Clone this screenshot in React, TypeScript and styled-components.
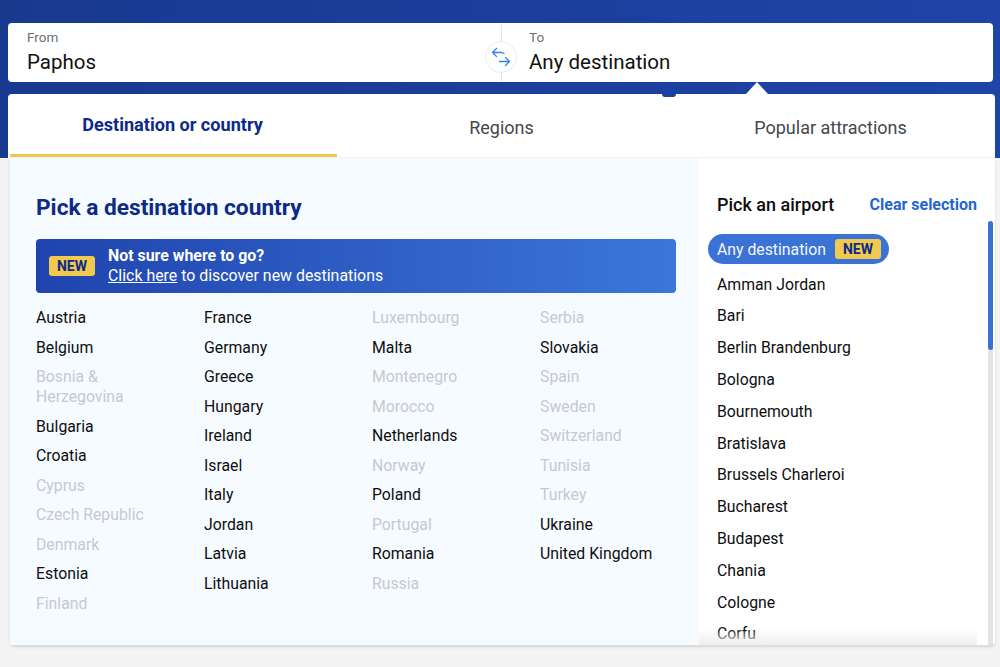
import styled, { createGlobalStyle } from "styled-components";

const GlobalStyle = createGlobalStyle`
	html, body {
		margin: 0;
		padding: 0;
		background: #f4f4f4;
		font-family: Roboto, "Liberation Sans", sans-serif;
		overflow: hidden;
	}
`;

const Page = styled.div`
	width: 1000px;
	height: 667px;
	overflow: hidden;
`;

// Hero: blue band that holds the search box and the tab bar
const Hero = styled.div`
	background: linear-gradient(90deg, #19398f 0%, #1e44a8 100%);
	height: 158px;
	padding: 23px 5px 0 8px;
	box-sizing: border-box;
`;

const SearchBox = styled.div`
	position: relative;
	display: flex;
	width: 985px;
	height: 59px;
	background: #fff;
	border-radius: 4px;
`;

const Field = styled.div<{ $left: number; $width?: number }>`
	padding: 7px 0 0 ${({ $left }) => $left}px;
	box-sizing: border-box;
	width: ${({ $width }) => ($width ? `${$width}px` : "auto")};
	flex: ${({ $width }) => ($width ? "none" : "1")};
`;

const FieldLabel = styled.div`
	font-size: 13.5px;
	line-height: 15px;
	color: #6b6e76;
`;

const FieldValue = styled.div`
	font-size: 20.5px;
	line-height: 26px;
	margin-top: 4px;
	color: #111;
`;

const Divider = styled.div`
	width: 1px;
	background: #e4e5e8;
	margin-top: 2px;
`;

const Swap = styled.div`
	position: absolute;
	left: 477px;
	top: 18px;
	width: 30px;
	height: 30px;
	border-radius: 50%;
	background: #fff;
	border: 1px solid #e9ebee;
	display: flex;
	align-items: center;
	justify-content: center;
`;

const Caret = styled.div`
	position: absolute;
	left: 738px;
	top: 59px;
	width: 0;
	height: 0;
	border-left: 11px solid transparent;
	border-right: 11px solid transparent;
	border-bottom: 12px solid #fff;
`;

const Bump = styled.div`
	position: absolute;
	left: 654px;
	top: 71px;
	width: 14px;
	height: 3px;
	background: #1a3f9e;
	border-radius: 0 0 4px 4px;
`;

const Tabs = styled.div`
	display: flex;
	width: 987px;
	height: 64px;
	margin-top: 12px;
	background: #fff;
	border-radius: 4px 4px 0 0;
	border-bottom: 1px solid #f1f2f3;
	box-sizing: border-box;
`;

const Tab = styled.div<{ $active?: boolean }>`
	position: relative;
	flex: 1;
	display: flex;
	align-items: center;
	justify-content: center;
	box-sizing: border-box;
	height: 63px;
	padding: ${({ $active }) => ($active ? "0 0 3px" : "3px 0 0")};
	font-size: ${({ $active }) => ($active ? "18.1px" : "18px")};
	font-weight: ${({ $active }) => ($active ? 700 : 400)};
	color: ${({ $active }) => ($active ? "#0c2a86" : "#45474d")};

	&::after {
		content: "";
		display: ${({ $active }) => ($active ? "block" : "none")};
		position: absolute;
		left: 2px;
		right: 0;
		bottom: 0;
		height: 3px;
		background: #f1c94f;
	}
`;

const Body = styled.div`
	display: flex;
	width: 985px;
	height: 487px;
	margin-left: 10px;
	background: #fff;
	box-shadow: 0 2px 3px rgba(0, 0, 0, 0.12);
	border-radius: 0 0 4px 4px;
`;

const Countries = styled.div`
	width: 689px;
	flex: none;
	box-sizing: border-box;
	background: #f6fbff;
	padding: 35px 23px 0 26px;
`;

const Heading = styled.h2`
	margin: 0;
	font-size: 22.7px;
	line-height: 29px;
	font-weight: 700;
	color: #0c2a86;
`;

const Banner = styled.div`
	display: flex;
	align-items: center;
	gap: 13px;
	height: 54px;
	margin-top: 17px;
	padding-left: 13px;
	border-radius: 4px;
	color: #fff;
	background: linear-gradient(90deg, #1f44ad 0%, #3c76da 100%);
`;

const NewBadge = styled.span`
	display: inline-flex;
	align-items: center;
	justify-content: center;
	width: 46px;
	height: 20px;
	border-radius: 3px;
	background: #f1c94f;
	color: #0c2a86;
	font-size: 14px;
	font-weight: 700;
`;

const BannerText = styled.div`
	font-size: 15.9px;
	line-height: 20px;
`;

const BannerTitle = styled.div`
	font-weight: 700;
`;

const Grid = styled.div`
	display: grid;
	grid-template-columns: repeat(4, 168px);
	margin-top: 15px;
`;

const Column = styled.div`
	display: flex;
	flex-direction: column;
	gap: 9.5px;
`;

const Country = styled.div<{ $off?: boolean }>`
	font-size: 15.8px;
	line-height: 20px;
	padding-right: 30px;
	color: ${({ $off }) => ($off ? "#c6c9ce" : "#0e0e10")};
`;

const Airports = styled.div`
	position: relative;
	flex: 1;
	overflow: hidden;
	padding: 34px 0 0 18px;
`;

const AirportHead = styled.div`
	display: flex;
	justify-content: space-between;
	align-items: center;
	width: 260px;
	height: 24px;
`;

const AirportTitle = styled.div`
	font-size: 18px;
	font-weight: 500;
	color: #0e0e10;
`;

const Clear = styled.div`
	font-size: 16px;
	font-weight: 700;
	color: #2465cf;
`;

const Selected = styled.div`
	display: inline-flex;
	align-items: center;
	justify-content: space-between;
	box-sizing: border-box;
	width: 181px;
	height: 30px;
	margin: 18px 0 0 -9px;
	padding: 0 8px 0 9px;
	border-radius: 15px;
	background: #3a72d6;
	color: #f3f7ff;
	font-size: 15.8px;
`;

const AirportList = styled.div`
	display: flex;
	flex-direction: column;
	gap: 11.8px;
	margin-top: 10.6px;
`;

const Airport = styled.div`
	font-size: 15.8px;
	line-height: 20px;
	color: #0e0e10;
`;

const Fade = styled.div`
	position: absolute;
	left: 0;
	bottom: 0;
	width: 278px;
	height: 16px;
	background: linear-gradient(180deg, rgba(240, 240, 240, 0), #eeeeee);
`;

const Track = styled.div`
	position: absolute;
	top: 63px;
	right: 2px;
	bottom: 0;
	width: 5px;
	background: #e1e3e7;
	border-radius: 3px 3px 0 0;
`;

const Thumb = styled.div`
	width: 5px;
	height: 129px;
	background: #3a72d6;
	border-radius: 3px;
`;

const columns: [string, boolean?][][] = [
	[["Austria"], ["Belgium"], ["Bosnia & Herzegovina", true], ["Bulgaria"], ["Croatia"], ["Cyprus", true], ["Czech Republic", true], ["Denmark", true], ["Estonia"], ["Finland", true]],
	[["France"], ["Germany"], ["Greece"], ["Hungary"], ["Ireland"], ["Israel"], ["Italy"], ["Jordan"], ["Latvia"], ["Lithuania"]],
	[["Luxembourg", true], ["Malta"], ["Montenegro", true], ["Morocco", true], ["Netherlands"], ["Norway", true], ["Poland"], ["Portugal", true], ["Romania"], ["Russia", true]],
	[["Serbia", true], ["Slovakia"], ["Spain", true], ["Sweden", true], ["Switzerland", true], ["Tunisia", true], ["Turkey", true], ["Ukraine"], ["United Kingdom"]],
];

const airports = ["Amman Jordan", "Bari", "Berlin Brandenburg", "Bologna", "Bournemouth", "Bratislava", "Brussels Charleroi", "Bucharest", "Budapest", "Chania", "Cologne", "Corfu"];

const App = () => {
	return (
		<Page>
			<GlobalStyle />
			<Hero>
				<SearchBox>
					<Field $left={19} $width={493}>
						<FieldLabel>From</FieldLabel>
						<FieldValue>Paphos</FieldValue>
					</Field>
					<Divider />
					<Field $left={27}>
						<FieldLabel>To</FieldLabel>
						<FieldValue>Any destination</FieldValue>
					</Field>
					<Swap>
						<svg width="20" height="20" viewBox="0 0 20 20" fill="none" stroke="#2f86e6" strokeWidth="1.3" strokeLinecap="round" strokeLinejoin="round">
							<path d="M5.500 1.500 1.500 5.500l4 4M1.500 5.500h9.500l2 1" />
							<path d="M14.500 10.500l4 4-4 4M18.500 14.500H8.500" />
						</svg>
					</Swap>
					<Caret />
					<Bump />
				</SearchBox>
				<Tabs>
					<Tab $active>Destination or country</Tab>
					<Tab>Regions</Tab>
					<Tab>Popular attractions</Tab>
				</Tabs>
			</Hero>
			<Body>
				<Countries>
					<Heading>Pick a destination country</Heading>
					<Banner>
						<NewBadge>NEW</NewBadge>
						<BannerText>
							<BannerTitle>Not sure where to go?</BannerTitle>
							<u>Click here</u> to discover new destinations
						</BannerText>
					</Banner>
					<Grid>
						{columns.map((col, i) => (
							<Column key={i}>
								{col.map(([name, off]) => (
									<Country key={name} $off={off}>
										{name}
									</Country>
								))}
							</Column>
						))}
					</Grid>
				</Countries>
				<Airports>
					<AirportHead>
						<AirportTitle>Pick an airport</AirportTitle>
						<Clear>Clear selection</Clear>
					</AirportHead>
					<Selected>
						Any destination
						<NewBadge>NEW</NewBadge>
					</Selected>
					<AirportList>
						{airports.map((name) => (
							<Airport key={name}>{name}</Airport>
						))}
					</AirportList>
					<Fade />
					<Track>
						<Thumb />
					</Track>
				</Airports>
			</Body>
		</Page>
	);
};

export default App;
